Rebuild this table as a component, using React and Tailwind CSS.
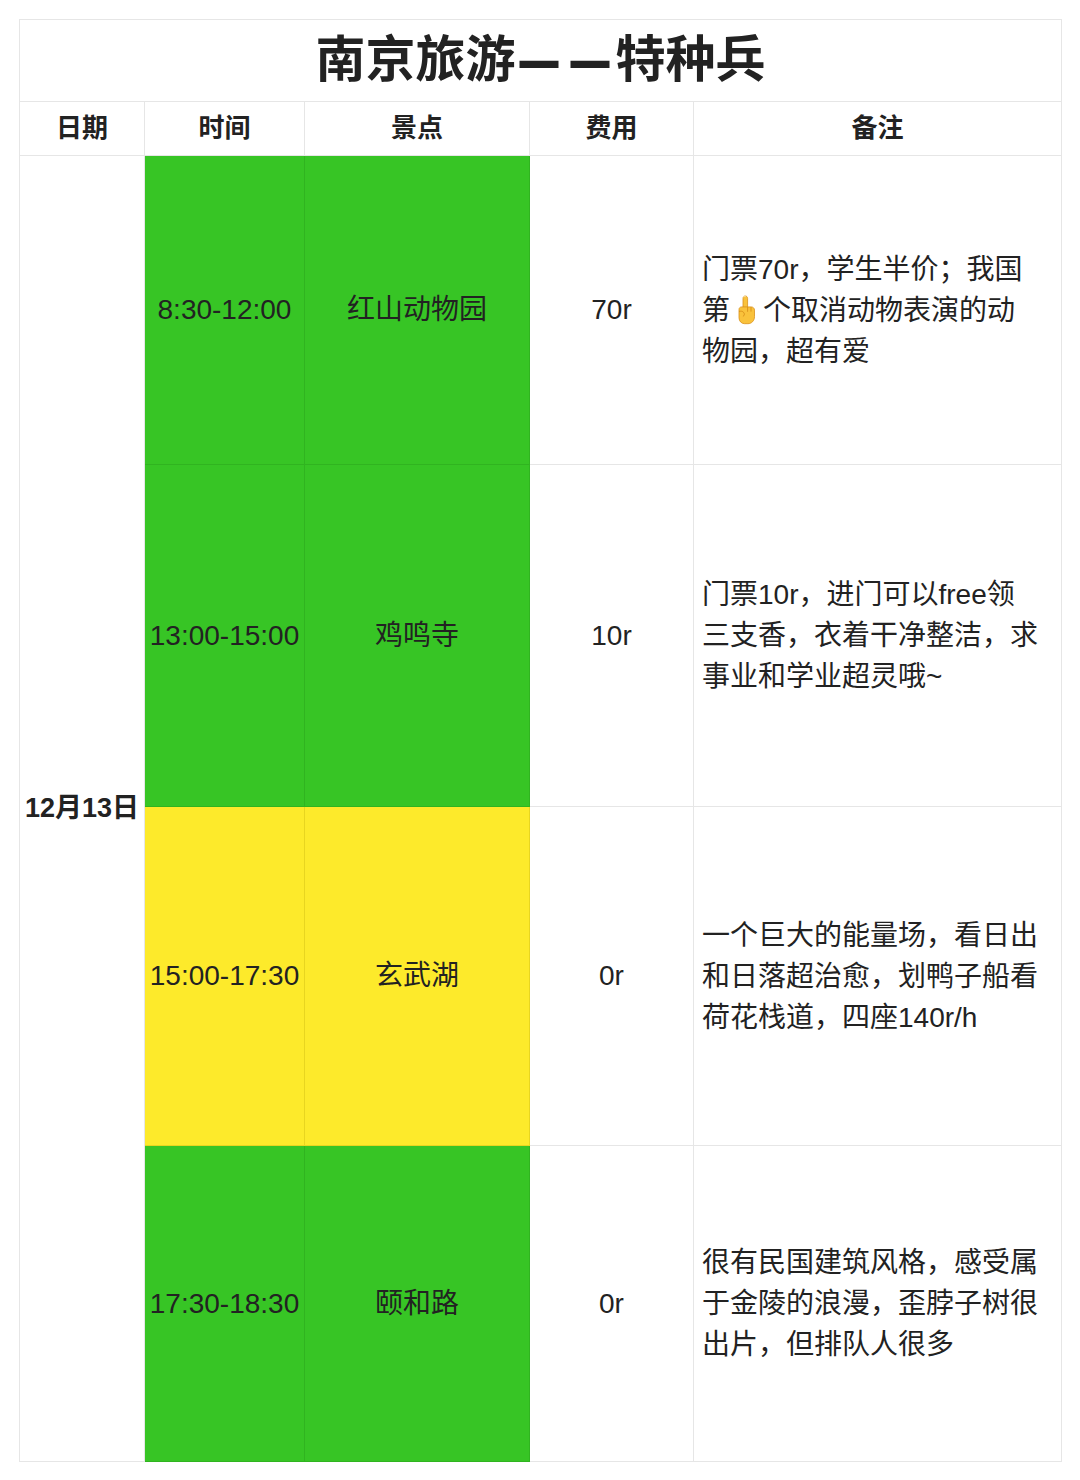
const FONT = { fontFamily: '"Liberation Sans", "Noto Sans CJK SC", sans-serif' };

function PointUp() {
  return (
    <svg
      viewBox="0 0 24 30"
      className="inline-block h-[30px] w-[26px] align-[-5px] ml-[3px] mr-[4px]"
      aria-hidden="true"
    >
      <path
        d="M9 3.5c0-1.6 1-2.5 2.3-2.5s2.3.9 2.3 2.5V13h-4.6z"
        fill="#f9c23c"
        stroke="#d9901a"
        strokeWidth="0.8"
      />
      <path
        d="M5 14.5c0-1.6 1.2-2.6 2.5-2.6h9.6c2 0 3.4 1.4 3.4 3.2v6.6c0 4-2.9 7-6.6 7h-3.3c-3.2 0-5.6-2.6-5.6-5.9z"
        fill="#f9c23c"
        stroke="#d9901a"
        strokeWidth="0.8"
      />
      <path d="M13.6 12v4.8M17 12.2v4.4" stroke="#d9901a" strokeWidth="0.9" fill="none" />
      <path
        d="M5 16.5c1.5-.6 3.7-.4 4.8 1.1 1 1.4.6 3.2-.9 3.8"
        stroke="#d9901a"
        strokeWidth="0.9"
        fill="none"
      />
      <path d="M9.6 1.8c.6-.5 1.6-.5 2.2 0" stroke="#fff3c4" strokeWidth="0.8" fill="none" />
    </svg>
  );
}

const rows = [
  {
    time: "8:30-12:00",
    spot: "红山动物园",
    cost: "70r",
    bg: "green",
    h: "h-[309px]",
    note: [
      "门票70r，学生半价；我国",
      <>
        第<PointUp />个取消动物表演的动
      </>,
      "物园，超有爱",
    ],
  },
  {
    time: "13:00-15:00",
    spot: "鸡鸣寺",
    cost: "10r",
    bg: "green",
    h: "h-[342px]",
    note: ["门票10r，进门可以free领", "三支香，衣着干净整洁，求", "事业和学业超灵哦~"],
  },
  {
    time: "15:00-17:30",
    spot: "玄武湖",
    cost: "0r",
    bg: "yellow",
    h: "h-[339px]",
    note: ["一个巨大的能量场，看日出", "和日落超治愈，划鸭子船看", "荷花栈道，四座140r/h"],
  },
  {
    time: "17:30-18:30",
    spot: "颐和路",
    cost: "0r",
    bg: "green",
    h: "h-[316px]",
    note: ["很有民国建筑风格，感受属", "于金陵的浪漫，歪脖子树很", "出片，但排队人很多"],
  },
];

function ColorCell({ bg, children }) {
  const tone =
    bg === "green"
      ? "bg-[#37c525] border-[#30b420]"
      : "bg-[#fdea2b] border-[#e8d520]";
  return (
    <td className={`border ${tone} text-center align-middle whitespace-nowrap`}>
      {children}
    </td>
  );
}

export default function App() {
  return (
    <div className="min-h-[1480px] bg-white pt-[19px] px-[19px] text-[#222]" style={FONT}>
      <table className="w-[1042px] table-fixed border-collapse">
        <colgroup>
          <col className="w-[125px]" />
          <col className="w-[160px]" />
          <col className="w-[225px]" />
          <col className="w-[164px]" />
          <col className="w-[368px]" />
        </colgroup>
        <tbody>
          <tr className="h-[82px]">
            <td
              colSpan={5}
              className="border border-[#e6e6e6] text-center align-middle text-[50px] font-bold whitespace-nowrap"
            >
              南京旅游
              <span className="inline-block ml-[4px] text-[39px] scale-y-[1.9] -translate-y-[4px]">—</span>
              <span className="inline-block ml-[12px] mr-[6px] text-[39px] scale-y-[1.9] -translate-y-[4px]">—</span>
              特种兵
            </td>
          </tr>
          <tr className="h-[54px] text-[26px] font-bold">
            {["日期", "时间", "景点", "费用", "备注"].map((t) => (
              <td key={t} className="border border-[#e6e6e6] text-center align-middle">
                {t}
              </td>
            ))}
          </tr>
          {rows.map((r, i) => (
            <tr key={r.time} className={`${r.h} text-[28px]`}>
              {i === 0 ? (
                <td
                  rowSpan={4}
                  className="border border-[#e6e6e6] text-center align-middle text-[27px] font-bold whitespace-nowrap"
                >
                  12月13日
                </td>
              ) : null}
              <ColorCell bg={r.bg}>{r.time}</ColorCell>
              <ColorCell bg={r.bg}>{r.spot}</ColorCell>
              <td className="border border-[#e6e6e6] text-center align-middle">{r.cost}</td>
              <td className="border border-[#e6e6e6] align-middle pl-[8px] pr-2 leading-[41px] whitespace-nowrap">
                {r.note.map((line, j) => (
                  <div key={j}>{line}</div>
                ))}
              </td>
            </tr>
          ))}
        </tbody>
      </table>
    </div>
  );
}
